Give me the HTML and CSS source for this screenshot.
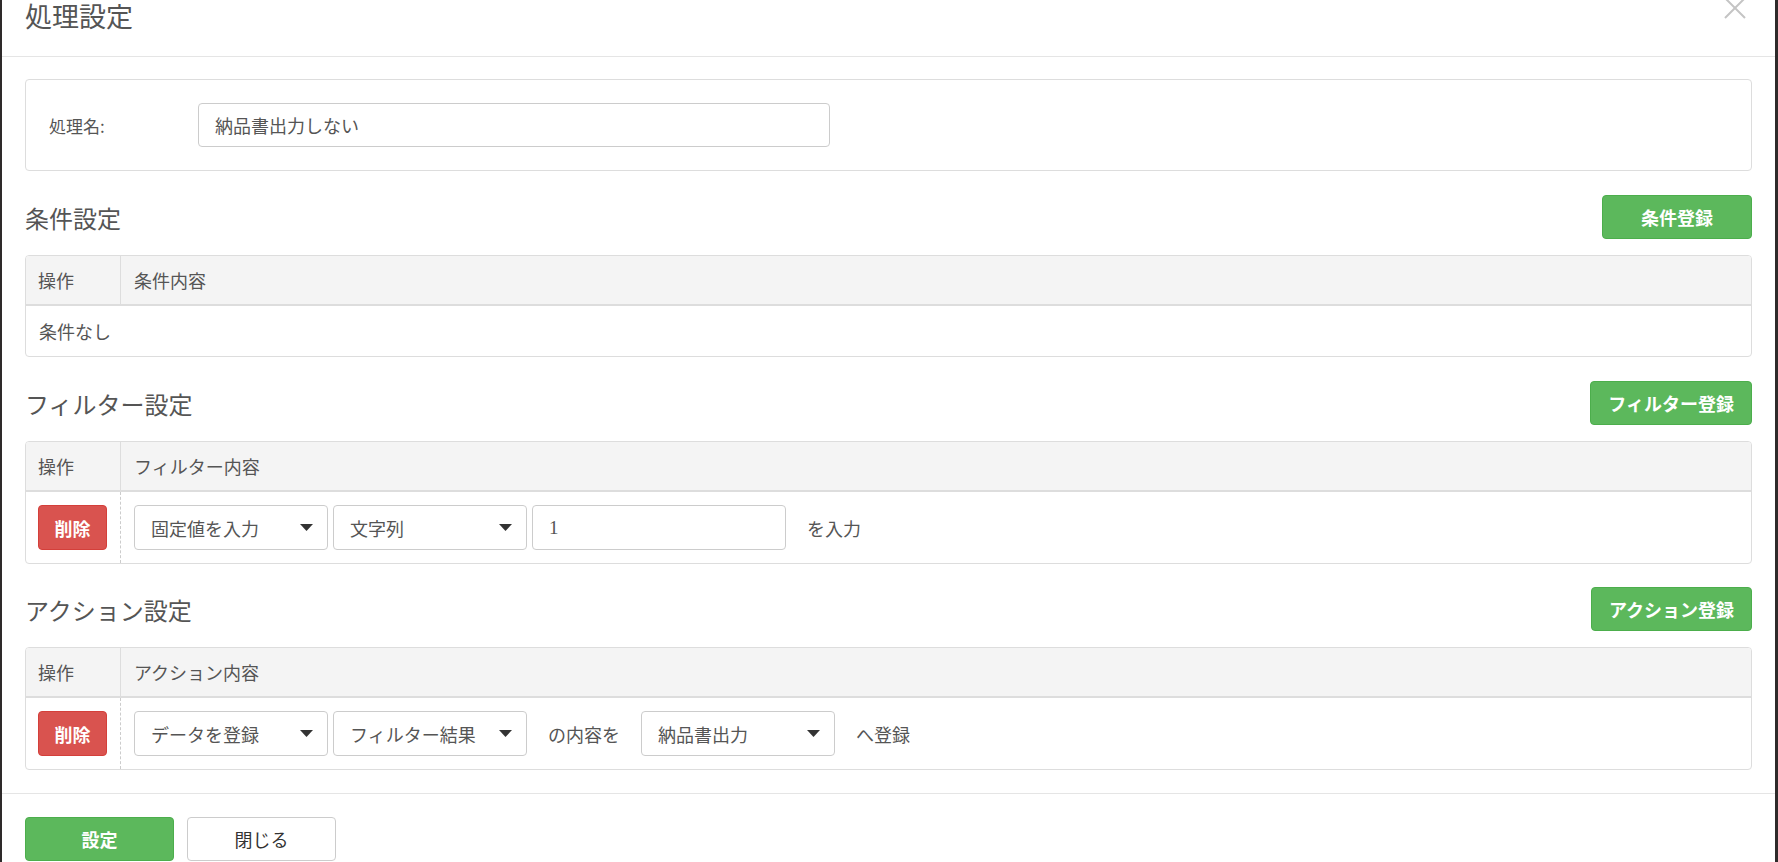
FILE: index.html
```html
<!DOCTYPE html>
<html lang="ja">
<head>
  <meta charset="UTF-8" />
  <title>処理設定</title>
  <link rel="stylesheet" href="styles.css">
</head>
<body>

  <!-- modal -->
  <div class="modal">
    <div class="modal-header">
      <h4 class="modal-title">処理設定</h4>
      <svg class="close" width="22" height="22" viewBox="0 0 22 22">
        <path d="M1 1 L21 21 M21 1 L1 21" stroke="#c4c4c4" stroke-width="2" fill="none"/>
      </svg>
    </div>

    <div class="modal-body">
      <div class="panel name-panel">
        <label class="name-label">処理名:</label>
        <input class="text-input name-input" type="text" value="納品書出力しない" />
      </div>

      <!-- 条件 -->
      <div class="section-head">
        <h3>条件設定</h3>
        <button class="btn btn-green">条件登録</button>
      </div>
      <div class="grid">
        <div class="grid-head">
          <div class="cell-op">操作</div>
          <div class="cell-body">条件内容</div>
        </div>
        <div class="grid-row empty-row">条件なし</div>
      </div>

      <!-- フィルター -->
      <div class="section-head">
        <h3>フィルター設定</h3>
        <button class="btn btn-green">フィルター登録</button>
      </div>
      <div class="grid">
        <div class="grid-head">
          <div class="cell-op">操作</div>
          <div class="cell-body">フィルター内容</div>
        </div>
        <div class="grid-row">
          <div class="cell-op dashed"><button class="btn btn-red">削除</button></div>
          <div class="cell-body controls">
            <div class="select"><span>固定値を入力</span><svg class="caret" width="13" height="7" viewBox="0 0 13 7"><path d="M0 0 H13 L6.5 7 Z" fill="#333"/></svg></div>
            <div class="select"><span>文字列</span><svg class="caret" width="13" height="7" viewBox="0 0 13 7"><path d="M0 0 H13 L6.5 7 Z" fill="#333"/></svg></div>
            <input class="text-input value-input" type="text" value="1" />
            <span class="inline-text">を入力</span>
          </div>
        </div>
      </div>

      <!-- アクション -->
      <div class="section-head section-last">
        <h3>アクション設定</h3>
        <button class="btn btn-green">アクション登録</button>
      </div>
      <div class="grid">
        <div class="grid-head">
          <div class="cell-op">操作</div>
          <div class="cell-body">アクション内容</div>
        </div>
        <div class="grid-row">
          <div class="cell-op dashed"><button class="btn btn-red">削除</button></div>
          <div class="cell-body controls">
            <div class="select"><span>データを登録</span><svg class="caret" width="13" height="7" viewBox="0 0 13 7"><path d="M0 0 H13 L6.5 7 Z" fill="#333"/></svg></div>
            <div class="select"><span>フィルター結果</span><svg class="caret" width="13" height="7" viewBox="0 0 13 7"><path d="M0 0 H13 L6.5 7 Z" fill="#333"/></svg></div>
            <span class="inline-text">の内容を</span>
            <div class="select"><span>納品書出力</span><svg class="caret" width="13" height="7" viewBox="0 0 13 7"><path d="M0 0 H13 L6.5 7 Z" fill="#333"/></svg></div>
            <span class="inline-text">へ登録</span>
          </div>
        </div>
      </div>
    </div>

    <div class="modal-footer">
      <button class="btn btn-green btn-footer">設定</button>
      <button class="btn btn-white btn-footer">閉じる</button>
    </div>
  </div>

</body>
</html>
```

FILE: styles.css
```css
* {
  margin: 0;
  padding: 0;
  box-sizing: border-box;
}

html, body {
  height: 100%;
  overflow: hidden;
}

body {
  background: #2e2a2a;
  font-family: "Noto Sans CJK JP", "Noto Sans", sans-serif;
  font-size: 18px;
  color: #555;
}

.modal {
  margin-left: 2px;
  width: 1773px;
  min-height: 862px;
  background: #fff;
}

/* header */
.modal-header {
  display: flex;
  justify-content: space-between;
  align-items: flex-start;
  height: 57px;
  padding: 1px 29px 0 23px;
  border-bottom: 1px solid #e5e5e5;
}

.modal-title {
  font-size: 27px;
  font-weight: normal;
  line-height: 29px;
  color: #555;
}

.close {
  margin-top: -4px;
}

/* body */
.modal-body {
  padding: 22px 23px 23px 23px;
}

.panel {
  border: 1px solid #ddd;
  border-radius: 4px;
}

.name-panel {
  display: flex;
  align-items: center;
  padding: 23px;
}

.name-label {
  width: 149px;
  font-size: 17px;
}

.text-input {
  height: 44px;
  border: 1px solid #ccc;
  border-radius: 4px;
  padding: 0 16px;
  font-family: inherit;
  font-size: 18px;
  color: #555;
  background: #fff;
}

.name-input {
  width: 632px;
}

.section-head {
  display: flex;
  justify-content: space-between;
  align-items: center;
  height: 44px;
  margin: 24px 0 16px;
}

.section-last {
  margin-top: 23px;
}

.section-head h3 {
  font-size: 24px;
  font-weight: normal;
  color: #555;
}

/* buttons */
.btn {
  font-family: inherit;
  font-size: 18px;
  font-weight: bold;
  border-radius: 4px;
  border: 1px solid transparent;
  cursor: pointer;
  height: 44px;
}

.btn-green {
  background: #5cb85c;
  border-color: #4cae4c;
  color: #fff;
  min-width: 150px;
  padding: 0 17px;
}

.btn-red {
  background: #d9534f;
  border-color: #d43f3a;
  color: #fff;
  height: 45px;
  width: 69px;
}

.btn-white {
  background: #fff;
  border-color: #ccc;
  color: #333;
  font-weight: normal;
}

.btn-footer {
  width: 149px;
  height: 44px;
  min-width: 0;
}

/* tables */
.grid {
  border: 1px solid #ddd;
  border-radius: 4px;
  overflow: hidden;
}

.grid-head {
  display: flex;
  height: 50px;
  background: #f4f4f4;
  border-bottom: 2px solid #ddd;
}

.grid-head .cell-op,
.grid-head .cell-body {
  display: flex;
  align-items: center;
}

.cell-op {
  width: 95px;
  flex-shrink: 0;
  padding-left: 12px;
  border-right: 1px solid #ddd;
}

.cell-op.dashed {
  border-right: 1px dashed #ccc;
}

.cell-body {
  flex: 1;
  padding-left: 13px;
}

.grid-row {
  display: flex;
}

.grid-row .cell-op,
.grid-row .cell-body {
  padding-top: 13px;
  padding-bottom: 13px;
}

.empty-row {
  height: 50px;
  align-items: center;
  padding-left: 13px;
}

.controls {
  display: flex;
  align-items: center;
  gap: 5px;
}

.select {
  display: flex;
  justify-content: space-between;
  align-items: center;
  width: 194px;
  height: 45px;
  padding: 0 14px 0 16px;
  border: 1px solid #ccc;
  border-radius: 4px;
  background: #fff;
}

.value-input {
  width: 254px;
  height: 45px;
  font-family: "Liberation Serif", "Noto Sans CJK JP", serif;
  font-size: 19px;
}

.inline-text {
  padding: 0 16px;
}

/* footer */
.modal-footer {
  display: flex;
  gap: 13px;
  padding: 23px 23px;
  border-top: 1px solid #e5e5e5;
}
```
